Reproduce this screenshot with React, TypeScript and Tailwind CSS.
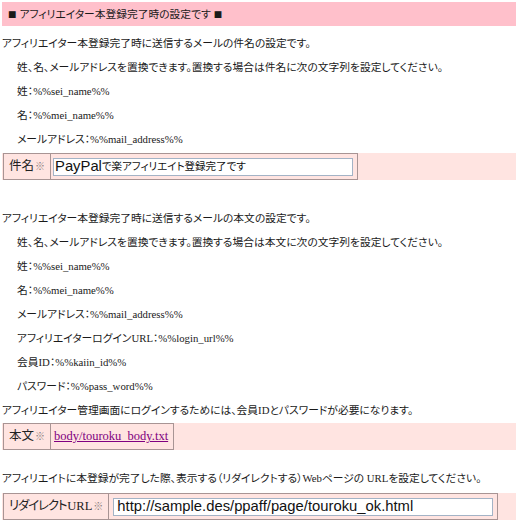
import React from "react";

const body = "font-['Liberation_Serif','Noto_Sans_CJK_JP',serif] [font-feature-settings:'palt']";

function Line({ children, indent = false }: { children: React.ReactNode; indent?: boolean }) {
  return (
    <p className={`h-[24px] leading-[24px] whitespace-nowrap ${indent ? "pl-[15px]" : ""}`}>{children}</p>
  );
}

function Label({ kana, latin }: { kana: string; latin?: string }) {
  return (
    <td className="border border-[#a89494] px-[5px] text-[12.5px] leading-[16px] whitespace-nowrap text-[#222] font-['Liberation_Serif','Noto_Sans_CJK_JP',serif]">
      <span className={latin ? "tracking-[-1.2px]" : ""}>{kana}</span>
      {latin ? <span className="text-[12.5px] ml-[1px]">{latin}</span> : null}
      <span className="text-[10px] text-[#8a8080] ml-[1px]">※</span>
    </td>
  );
}

export default function App() {
  return (
    <div className={`w-[518px] h-[526px] bg-white px-[2px] pt-[2px] text-[10.75px] text-[#1a1a1a] ${body}`}>
      <div className="h-[24px] bg-[#ffc0cb] pl-[6px] flex items-center font-['Noto_Sans_CJK_JP',sans-serif]">
        <span className="text-[8.5px]">■</span>
        <span className="ml-[3px]">アフィリエイター本登録完了時の設定です</span>
        <span className="text-[8.5px] ml-[3px]">■</span>
      </div>

      <div className="mt-[5px]">
        <Line>アフィリエイター本登録完了時に送信するメールの件名の設定です。</Line>
        <Line indent>姓、名、メールアドレスを置換できます。置換する場合は件名に次の文字列を設定してください。</Line>
        <Line indent>姓：%%sei_name%%</Line>
        <Line indent>名：%%mei_name%%</Line>
        <Line indent>メールアドレス：%%mail_address%%</Line>
      </div>

      <div className="mt-[2px] bg-[#ffe4e1] flex">
        <table className="border-collapse ml-[1px]">
          <tbody>
            <tr className="h-[26px]">
              <Label kana="件名" />
              <td className="border border-[#a89494] pl-[2px] pr-[4px] py-0">
                <div className="w-[300px] h-[18px] bg-white border border-[#a3b3c6] pl-[1px] flex items-center whitespace-nowrap overflow-hidden font-['Liberation_Sans','Noto_Sans_CJK_JP',sans-serif] text-[#111]">
                  <span className="text-[14.8px]">PayPal</span>
                  <span className="text-[10.5px]">で楽アフィリエイト登録完了です</span>
                </div>
              </td>
            </tr>
          </tbody>
        </table>
      </div>

      <div className="mt-[26px]">
        <Line>アフィリエイター本登録完了時に送信するメールの本文の設定です。</Line>
        <Line indent>姓、名、メールアドレスを置換できます。置換する場合は本文に次の文字列を設定してください。</Line>
        <Line indent>姓：%%sei_name%%</Line>
        <Line indent>名：%%mei_name%%</Line>
        <Line indent>メールアドレス：%%mail_address%%</Line>
        <Line indent>アフィリエイターログインURL：%%login_url%%</Line>
        <Line indent>会員ID：%%kaiin_id%%</Line>
        <Line indent>パスワード：%%pass_word%%</Line>
        <Line>アフィリエイター管理画面にログインするためには、会員IDとパスワードが必要になります。</Line>
      </div>

      <div className="mt-[1px] bg-[#ffe4e1] flex">
        <table className="border-collapse ml-[1px]">
          <tbody>
            <tr className="h-[26px]">
              <Label kana="本文" />
              <td className="border border-[#a89494] pl-[3px] pr-[5px] whitespace-nowrap">
                <a href="#" className="text-[12.5px] text-[#800080] underline font-['Liberation_Serif',serif]">
                  body/touroku_body.txt
                </a>
              </td>
            </tr>
          </tbody>
        </table>
      </div>

      <div className="mt-[16px]">
        <Line>アフィリエイトに本登録が完了した際、表示する（リダイレクトする）Webページの URLを設定してください。</Line>
      </div>

      <div className="mt-[3px] bg-[#ffe4e1] flex">
        <table className="border-collapse ml-[1px]">
          <tbody>
            <tr className="h-[26px]">
              <Label kana="リダイレクト" latin="URL" />
              <td className="border border-[#a89494] pl-[4px] pr-[4px] py-0">
                <div className="w-[380px] h-[18px] bg-white border border-[#a3b3c6] pl-[3px] flex items-center whitespace-nowrap overflow-hidden font-['Liberation_Sans',sans-serif] text-[14.8px] text-[#111]">
                  http://sample.des/ppaff/page/touroku_ok.html
                </div>
              </td>
            </tr>
          </tbody>
        </table>
      </div>
    </div>
  );
}
